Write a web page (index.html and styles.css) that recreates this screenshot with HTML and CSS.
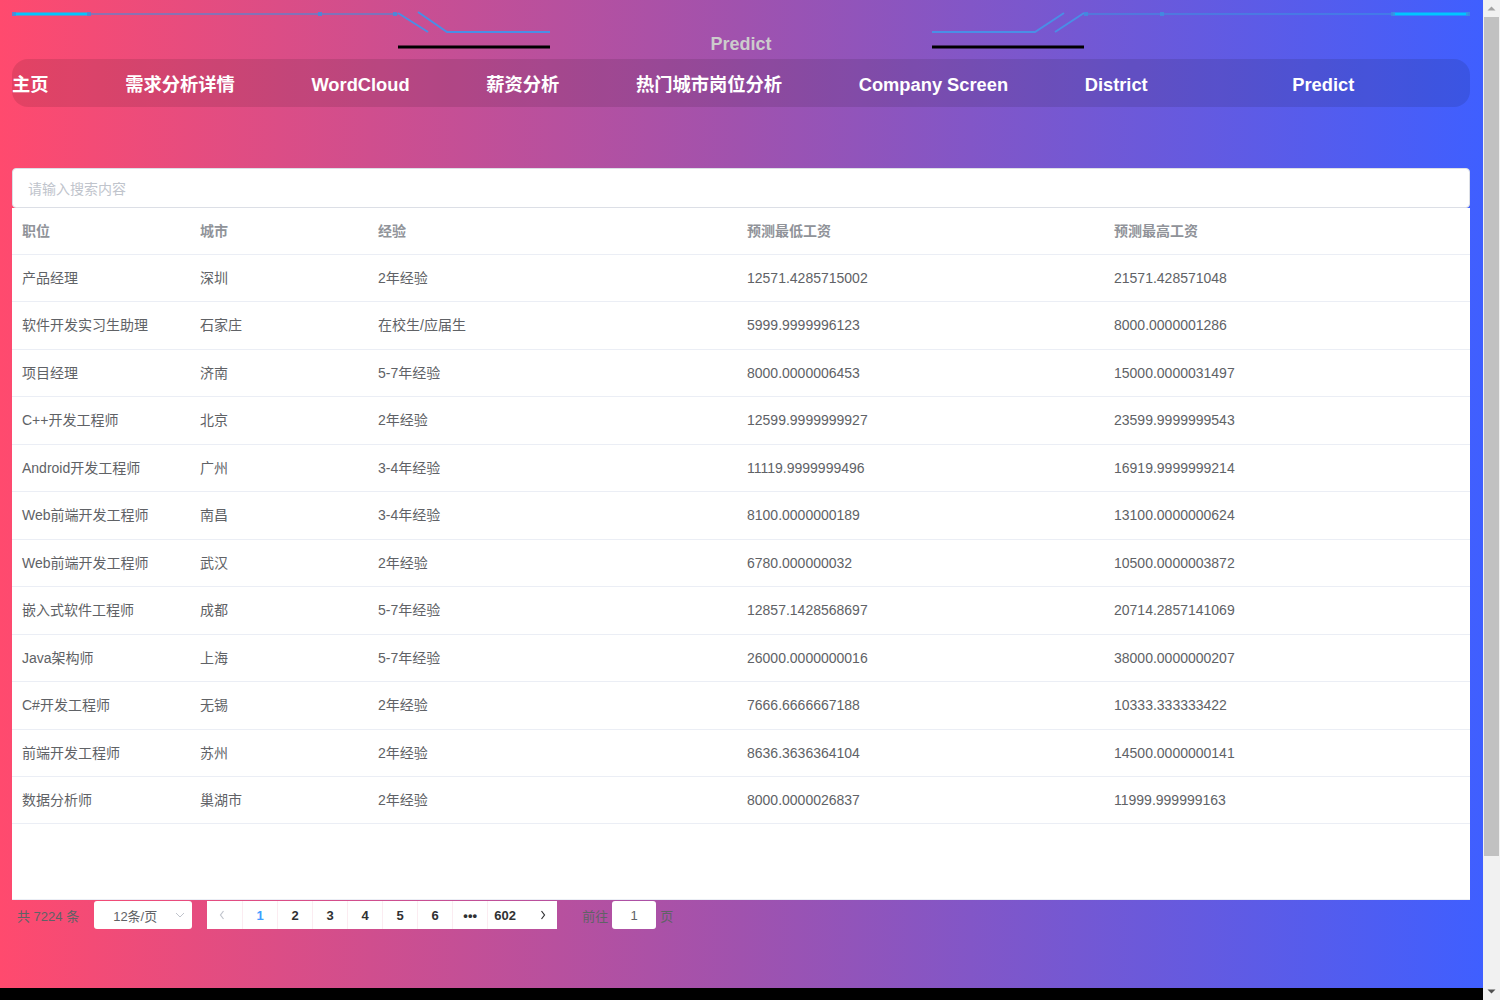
FILE: index.html
```html
<!DOCTYPE html>
<html lang="zh-CN">
<head>
<meta charset="utf-8">
<title>Predict</title>
<link rel="stylesheet" href="styles.css">
</head>
<body>
<div class="main">
  <div class="page">
    <div class="wrap">
      <header class="header">
        <svg class="deco" width="1458" height="59" viewBox="0 0 1458 59" aria-hidden="true">
          <g transform="translate(-12,0)">
            <line x1="14" y1="14" x2="398" y2="14" class="dim"/>
            <line x1="14" y1="14" x2="87" y2="14" class="bright"/>
            <rect x="12" y="12" width="4" height="4" class="dot"/>
            <rect x="87" y="12" width="4" height="4" class="dot"/>
            <rect x="318" y="12" width="4" height="4" class="dot"/>
            <rect x="393" y="12" width="4" height="4" class="dot"/>
            <polyline points="398,13 428,32" class="blue"/>
            <polyline points="418,12 447,32 550,32" class="blue"/>
            <line x1="398" y1="47" x2="550" y2="47" class="bar"/>

            <polyline points="932,32 1035,32 1064,13" class="blue"/>
            <polyline points="1055,32 1084,13" class="blue"/>
            <line x1="1084" y1="14" x2="1468" y2="14" class="dim"/>
            <line x1="1393" y1="14" x2="1468" y2="14" class="bright"/>
            <rect x="1084" y="12" width="4" height="4" class="dot"/>
            <rect x="1160" y="12" width="4" height="4" class="dot"/>
            <rect x="1391" y="12" width="4" height="4" class="dot"/>
            <rect x="1466" y="12" width="4" height="4" class="dot"/>
            <line x1="932" y1="47" x2="1084" y2="47" class="bar"/>
          </g>
        </svg>
        <div class="title">Predict</div>
      </header>

      <nav class="nav">
        <a class="nav-item">主页</a>
        <a class="nav-item">需求分析详情</a>
        <a class="nav-item">WordCloud</a>
        <a class="nav-item">薪资分析</a>
        <a class="nav-item">热门城市岗位分析</a>
        <a class="nav-item">Company Screen</a>
        <a class="nav-item">District</a>
        <a class="nav-item nav-item--last">Predict</a>
      </nav>

      <div class="search">
        <span class="placeholder">请输入搜索内容</span>
      </div>

      <div class="table-wrap">
        <table class="table">
          <colgroup>
            <col class="c1"><col class="c2"><col class="c3"><col class="c4"><col class="c5">
          </colgroup>
          <thead>
            <tr><th>职位</th><th>城市</th><th>经验</th><th>预测最低工资</th><th>预测最高工资</th></tr>
          </thead>
          <tbody>
            <tr><td>产品经理</td><td>深圳</td><td>2年经验</td><td>12571.4285715002</td><td>21571.428571048</td></tr>
            <tr><td>软件开发实习生助理</td><td>石家庄</td><td>在校生/应届生</td><td>5999.9999996123</td><td>8000.0000001286</td></tr>
            <tr><td>项目经理</td><td>济南</td><td>5-7年经验</td><td>8000.0000006453</td><td>15000.0000031497</td></tr>
            <tr><td>C++开发工程师</td><td>北京</td><td>2年经验</td><td>12599.9999999927</td><td>23599.9999999543</td></tr>
            <tr><td>Android开发工程师</td><td>广州</td><td>3-4年经验</td><td>11119.9999999496</td><td>16919.9999999214</td></tr>
            <tr><td>Web前端开发工程师</td><td>南昌</td><td>3-4年经验</td><td>8100.0000000189</td><td>13100.0000000624</td></tr>
            <tr><td>Web前端开发工程师</td><td>武汉</td><td>2年经验</td><td>6780.000000032</td><td>10500.0000003872</td></tr>
            <tr><td>嵌入式软件工程师</td><td>成都</td><td>5-7年经验</td><td>12857.1428568697</td><td>20714.2857141069</td></tr>
            <tr><td>Java架构师</td><td>上海</td><td>5-7年经验</td><td>26000.0000000016</td><td>38000.0000000207</td></tr>
            <tr><td>C#开发工程师</td><td>无锡</td><td>2年经验</td><td>7666.6666667188</td><td>10333.333333422</td></tr>
            <tr><td>前端开发工程师</td><td>苏州</td><td>2年经验</td><td>8636.3636364104</td><td>14500.0000000141</td></tr>
            <tr><td>数据分析师</td><td>巢湖市</td><td>2年经验</td><td>8000.0000026837</td><td>11999.999999163</td></tr>
          </tbody>
        </table>
      </div>

      <div class="pagination">
        <span class="total">共 7224 条</span>
        <span class="sizes">
          <span class="sizes-text">12条/页</span>
          <svg class="sizes-arrow" width="10" height="6" viewBox="0 0 10 6"><polyline points="1,1 5,5 9,1"/></svg>
        </span>
        <ul class="pager">
          <li class="pg-btn pg-btn--disabled"><svg width="8" height="12" viewBox="0 0 8 12"><polyline points="5.5,2 2.5,6 5.5,10"/></svg></li>
          <li class="pg-num pg-num--active">1</li>
          <li class="pg-num">2</li>
          <li class="pg-num">3</li>
          <li class="pg-num">4</li>
          <li class="pg-num">5</li>
          <li class="pg-num">6</li>
          <li class="pg-num">•••</li>
          <li class="pg-num">602</li>
          <li class="pg-btn pg-btn--next"><svg width="8" height="12" viewBox="0 0 8 12"><polyline points="2.5,2 5.5,6 2.5,10"/></svg></li>
        </ul>
        <span class="jump">前往</span>
        <span class="jump-input">1</span>
        <span class="jump-unit">页</span>
      </div>
    </div>
  </div>
</div>
<div class="scrollbar" aria-hidden="true">
  <div class="sb-btn">
    <svg width="17" height="17" viewBox="0 0 17 17"><polygon points="4.5,10.5 8.5,6.5 12.5,10.5" class="sb-up"/></svg>
  </div>
  <div class="sb-thumb"></div>
  <div class="sb-track"></div>
  <div class="sb-btn">
    <svg width="17" height="17" viewBox="0 0 17 17"><polygon points="4.5,6.5 12.5,6.5 8.5,10.5" class="sb-down"/></svg>
  </div>
</div>
</body>
</html>
```

FILE: styles.css
```css
html, body {
  margin: 0;
  padding: 0;
  background: #000;
}

body {
  display: flex;
  height: 1000px;
  overflow: hidden;
  font-family: "Liberation Sans", Arial, "Noto Sans CJK SC", sans-serif;
}

.main {
  flex: 1;
  min-width: 0;
  background: #000;
}

/* window scrollbar as seen in the screenshot */
.scrollbar {
  width: 17px;
  flex: none;
  display: flex;
  flex-direction: column;
  background: #f1f1f1;
}

.sb-btn {
  height: 17px;
  flex: none;
}

.sb-btn svg {
  display: block;
}

.sb-up {
  fill: #a3a3a3;
}

.sb-down {
  fill: #505050;
}

.sb-thumb {
  height: 839px;
  margin: 0 1px;
  background: #c1c1c1;
  flex: none;
}

.sb-track {
  flex: 1;
}

.page {
  height: 988px;
  background: linear-gradient(90deg, #ff4a6e 0%, #a052ae 50%, #3f5fff 100%);
  overflow: hidden;
}

.wrap {
  margin: 0 13px 0 12px;
}

.header {
  position: relative;
  height: 59px;
  box-sizing: border-box;
  padding-top: 33px;
}

.deco {
  position: absolute;
  left: 0;
  top: 0;
}

.deco .dim {
  stroke: #3d8fe0;
  stroke-opacity: 0.55;
  stroke-width: 2;
}

.deco .bright {
  stroke: #00c6ff;
  stroke-width: 3;
}

.deco .dot {
  fill: #3d8fe0;
  fill-opacity: 0.8;
}

.deco .blue {
  fill: none;
  stroke: #4a8ee6;
  stroke-width: 2;
}

.deco .bar {
  stroke: #000;
  stroke-width: 3;
}

.title {
  position: relative;
  text-align: center;
  font-size: 18px;
  line-height: 22px;
  font-weight: bold;
  color: #cccccc;
}

.nav {
  display: flex;
  align-items: center;
  gap: 76.6px;
  height: 48px;
  box-sizing: border-box;
  padding-top: 3px;
  border-radius: 16px;
  background: rgba(0, 0, 0, 0.1);
}

.nav-item {
  color: #fff;
  font-size: 18.3px;
  font-weight: bold;
  line-height: 24px;
  white-space: nowrap;
}

.nav-item--last {
  margin-left: 68px;
}

.search {
  margin-top: 61px;
  height: 40px;
  box-sizing: border-box;
  background: #fff;
  border: 1px solid #dcdfe6;
  border-radius: 4px;
  display: flex;
  align-items: center;
  padding-left: 15px;
}

.placeholder {
  font-size: 14px;
  color: #c0c4cc;
}

.table-wrap {
  height: 692px;
  background: #fff;
  box-sizing: border-box;
  border-bottom: 1px solid #ebeef5;
}

.table {
  width: 100%;
  table-layout: fixed;
  border-collapse: collapse;
  font-size: 14px;
}

.c1, .c2 { width: 178px; }
.c3 { width: 369px; }
.c4 { width: 367px; }
.c5 { width: 366px; }

.table th {
  text-align: left;
  font-weight: bold;
  color: #909399;
  padding: 12px 10px;
  line-height: 22px;
  border-bottom: 1px solid #ebeef5;
}

.table td {
  color: #606266;
  padding: 12px 10px;
  line-height: 22.45px;
  border-bottom: 1px solid #ebeef5;
  white-space: nowrap;
}

.pagination {
  display: flex;
  align-items: center;
  height: 28px;
  margin-top: 1px;
  padding-left: 5px;
  font-size: 13px;
  color: #606266;
}

.total {
  margin-right: 15px;
}

.sizes {
  width: 98px;
  height: 28px;
  box-sizing: border-box;
  background: #fff;
  border-radius: 3px;
  display: flex;
  align-items: center;
  padding-left: 19px;
  padding-right: 7px;
  margin-right: 15px;
}

.sizes-text {
  flex: 1;
  color: #606266;
}

.sizes-arrow polyline {
  fill: none;
  stroke: #c0c4cc;
  stroke-width: 1;
}

.pager {
  display: flex;
  margin: 0;
  padding: 0;
  list-style: none;
  background: #fff;
  height: 28px;
}

.pg-num, .pg-btn {
  width: 35px;
  height: 28px;
  display: flex;
  align-items: center;
  justify-content: center;
  font-weight: bold;
  color: #303133;
  box-sizing: border-box;
}

.pg-btn {
  padding-right: 6px;
}

.pg-btn--next {
  padding-right: 0;
  padding-left: 6px;
}

.pg-num {
  border-left: 1px solid #fbecf1;
}

.pg-num--active {
  color: #409eff;
}

.pg-btn polyline {
  fill: none;
  stroke: #303133;
  stroke-width: 1.2;
}

.pg-btn--disabled polyline {
  stroke: #c0c4cc;
}

.jump {
  margin-left: 25px;
}

.jump-input {
  width: 44px;
  height: 28px;
  margin: 0 4px 0 4px;
  background: #fff;
  border-radius: 3px;
  display: flex;
  align-items: center;
  justify-content: center;
  color: #606266;
}
```
